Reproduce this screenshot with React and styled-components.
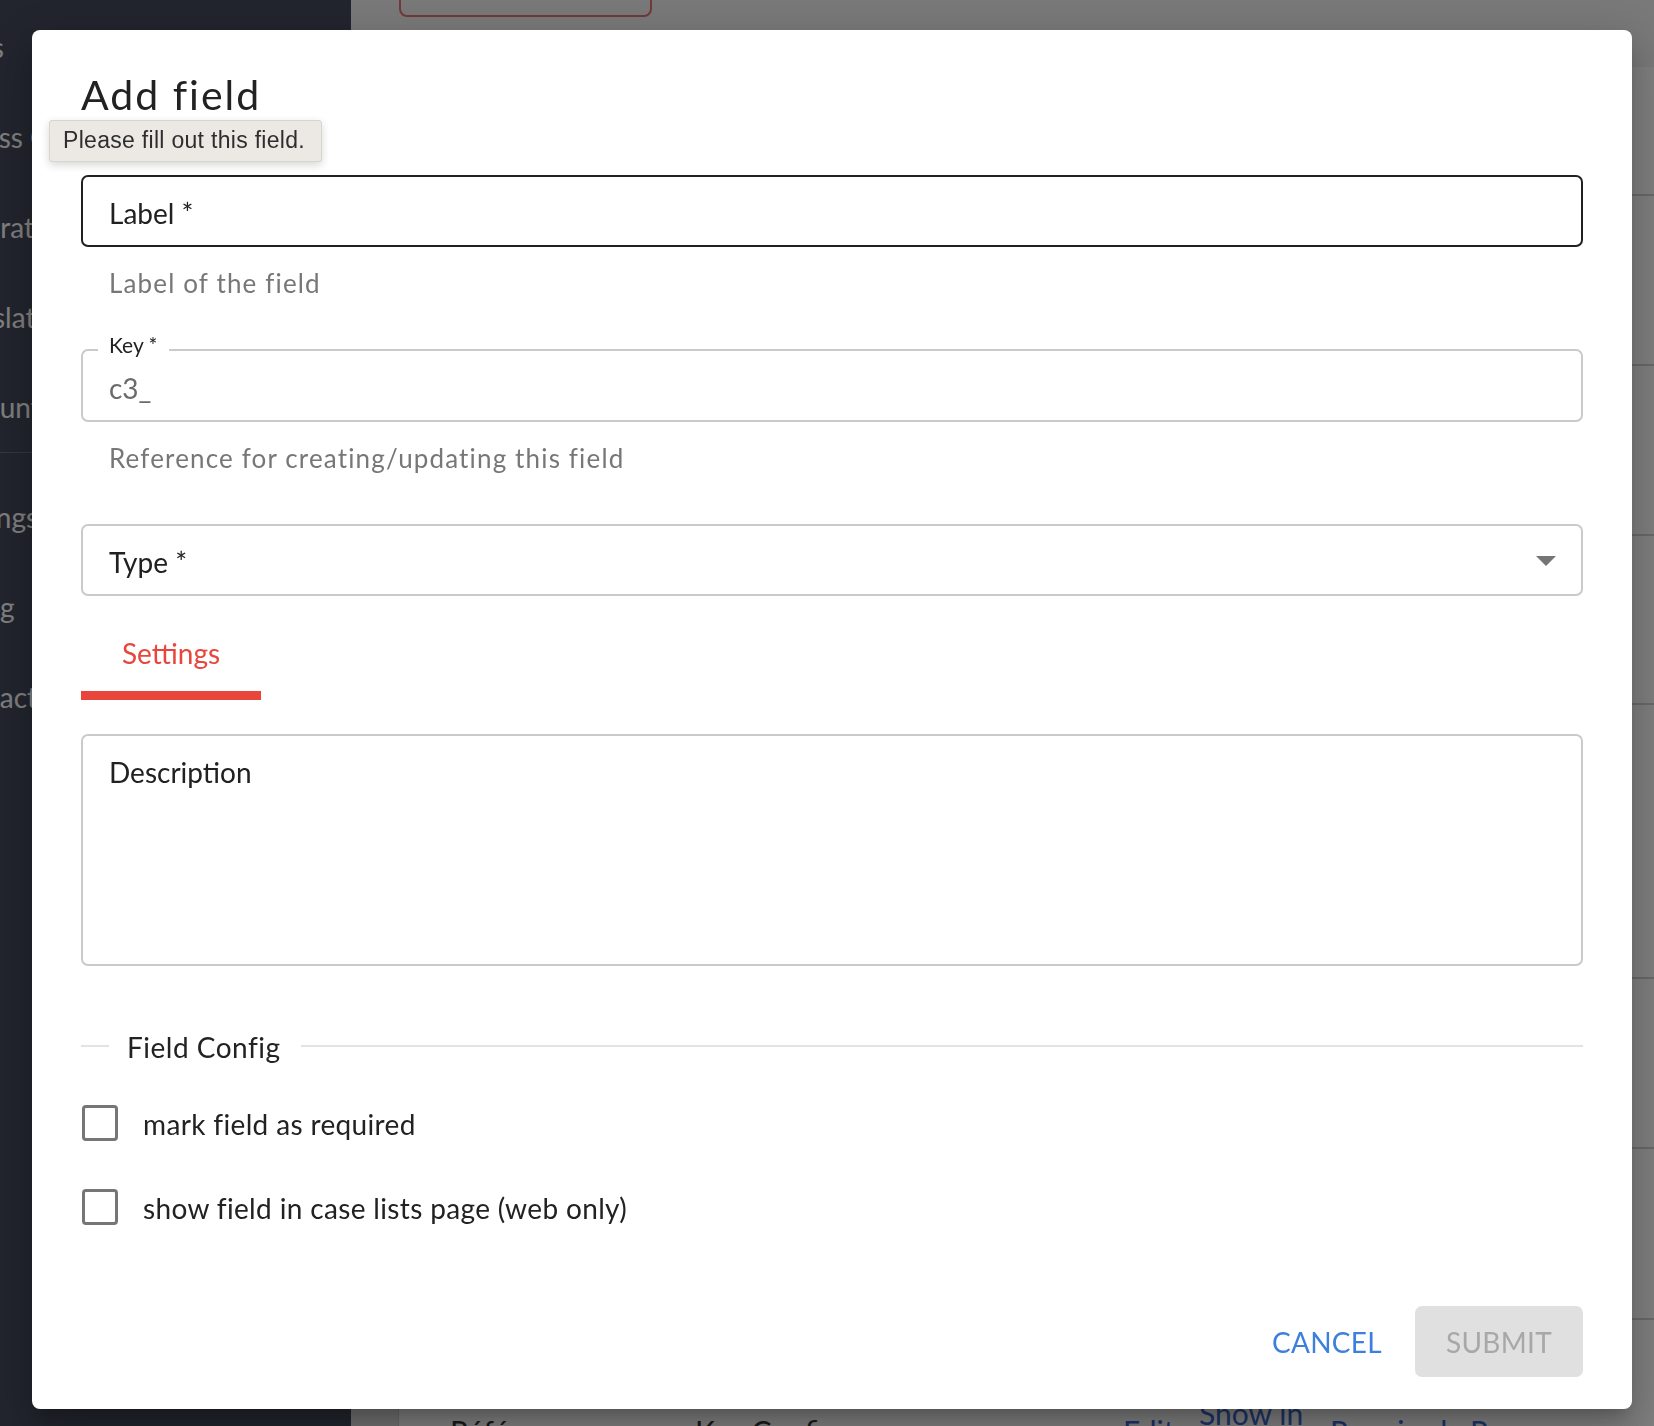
import React from 'react'
import styled, { createGlobalStyle } from 'styled-components'

const GlobalStyle = createGlobalStyle`
	html, body {
		margin: 0;
		padding: 0;
		height: 100%;
		overflow: hidden;
	}
	body {
		font-family: Lato, 'Noto Sans', sans-serif;
		color: #212121;
	}
	* {
		box-sizing: border-box;
	}
`

const navTop = [
	{ text: 'Forms', offset: -72 },
	{ text: 'Business Cases', offset: -84 },
	{ text: 'Integrations', offset: -62 },
	{ text: 'Translations', offset: -60 },
	{ text: 'Accounts', offset: -61 },
]

const navBottom = [
	{ text: 'Settings', offset: -60 },
	{ text: 'Billing', offset: -60 },
	{ text: 'Contact', offset: -60 },
]

// heights of the table rows that sit behind the dialog
const rows = [129, 170, 170, 169, 274, 170, 171]

const App = () => {
	return (
		<>
			<GlobalStyle />
			<Shell>
				<Sidebar>
					{navTop.map((item) => (
						<NavItem key={item.text} $offset={item.offset}>
							{item.text}
						</NavItem>
					))}
					<NavDivider />
					{navBottom.map((item) => (
						<NavItem key={item.text} $offset={item.offset}>
							{item.text}
						</NavItem>
					))}
				</Sidebar>
				<Main>
					<TopBar>
						<OutlineButton>Add field</OutlineButton>
					</TopBar>
					<Card>
						{rows.map((h, i) => (
							<Row key={i} $h={h} />
						))}
						<FieldRow>
							<Cell $w={245}>Référence</Cell>
							<Cell $w={428}>Key Config</Cell>
							<LinkCell $w={76}>Edit</LinkCell>
							<LinkCell $w={131}>Show in list</LinkCell>
							<LinkCell $w={140}>Required</LinkCell>
							<LinkCell $w={140}>Remove</LinkCell>
						</FieldRow>
					</Card>
				</Main>
			</Shell>

			<Backdrop />

			<Dialog>
				<Title>Add field</Title>
				<Tooltip>Please fill out this field.</Tooltip>

				<Outlined $h={72} $focused style={{ marginTop: 56 }}>
					<FieldText>Label *</FieldText>
				</Outlined>
				<Helper>Label of the field</Helper>

				<Outlined $h={73} style={{ marginTop: 50 }}>
					<FloatingLabel>Key *</FloatingLabel>
					<FieldText $muted>c3_</FieldText>
				</Outlined>
				<Helper>Reference for creating/updating this field</Helper>

				<Outlined $h={72} $select style={{ marginTop: 50 }}>
					<FieldText>Type *</FieldText>
					<svg width='48' height='48' viewBox='0 0 24 24'>
						<path d='M7 10l5 5 5-5z' fill='#757575' />
					</svg>
				</Outlined>

				<Tabs>
					<Tab>Settings</Tab>
				</Tabs>

				<Outlined $h={232} $top style={{ marginTop: 34 }}>
					<FieldText>Description</FieldText>
				</Outlined>

				<Divider>
					<DividerLine $short />
					<DividerText>Field Config</DividerText>
					<DividerLine />
				</Divider>

				<CheckRow $first>
					<CheckBox />
					<CheckLabel>mark field as required</CheckLabel>
				</CheckRow>
				<CheckRow>
					<CheckBox />
					<CheckLabel>show field in case lists page (web only)</CheckLabel>
				</CheckRow>

				<Actions>
					<CancelButton>Cancel</CancelButton>
					<SubmitButton disabled>Submit</SubmitButton>
				</Actions>
			</Dialog>
		</>
	)
}

const Shell = styled.div`
	display: flex;
	height: 100vh;
	overflow: hidden;
	background: #ffffff;
`

const Sidebar = styled.nav`
	width: 351px;
	flex: none;
	padding-top: 2px;
	background: #454a5c;
	color: #ffffff;
	overflow: hidden;
`

const NavItem = styled.div`
	height: 90px;
	display: flex;
	align-items: center;
	margin-left: ${(p) => p.$offset}px;
	font-size: 28px;
	white-space: nowrap;
`

const NavDivider = styled.div`
	height: 1px;
	margin-bottom: 19px;
	background: rgba(255, 255, 255, 0.2);
`

const Main = styled.main`
	flex: 1;
	min-width: 0;
	display: flex;
	flex-direction: column;
	margin-top: -70px;
	padding-left: 47px;
	background: #e2e2e2;
`

const TopBar = styled.div`
	height: 137px;
	flex: none;
	margin-left: -47px;
	padding: 7px 0 0 48px;
	background: #f2f2f2;
`

const OutlineButton = styled.button`
	width: 253px;
	height: 80px;
	border: 2px solid #e57373;
	border-radius: 8px;
	background: transparent;
	color: #e57373;
	font-family: Lato, sans-serif;
	font-size: 24px;
`

const Card = styled.div`
	flex: 1;
	background: #ffffff;
	border-left: 1px solid #cfcfcf;
`

const Row = styled.div`
	height: ${(p) => p.$h}px;
	border-bottom: 2px solid #d2d2d2;
`

const FieldRow = styled.div`
	height: 222px;
	display: flex;
	align-items: center;
	padding-left: 51px;
	font-size: 30px;
`

const Cell = styled.div`
	width: ${(p) => p.$w}px;
	flex: none;
	color: #333333;
`

const LinkCell = styled(Cell)`
	color: #3a66d0;
`

const Backdrop = styled.div`
	position: fixed;
	inset: 0;
	background: rgba(0, 0, 0, 0.5);
`

const Dialog = styled.div`
	position: fixed;
	top: 30px;
	left: 32px;
	width: 1600px;
	display: flex;
	flex-direction: column;
	padding: 41px 49px 32px;
	background: #ffffff;
	border-radius: 8px;
	box-shadow: 0 11px 15px -7px rgba(0, 0, 0, 0.2),
		0 24px 38px 3px rgba(0, 0, 0, 0.14), 0 9px 46px 8px rgba(0, 0, 0, 0.12);
`

const Title = styled.h2`
	margin: 0;
	font-size: 41px;
	line-height: 48px;
	font-weight: 400;
	letter-spacing: 2px;
	color: #222222;
`

const Tooltip = styled.div`
	position: absolute;
	left: 17px;
	top: 90px;
	padding: 6px 16px 7px 13px;
	background: #ece9e5;
	border: 1px solid #d8d5d0;
	border-radius: 3px;
	box-shadow: 0 3px 9px rgba(0, 0, 0, 0.16);
	font-family: 'Liberation Sans', Arial, sans-serif;
	font-size: 23px;
	line-height: 27px;
	letter-spacing: 0.3px;
	color: #2e2e2e;
	white-space: nowrap;
`

const Outlined = styled.div`
	position: relative;
	height: ${(p) => p.$h}px;
	flex: none;
	display: flex;
	align-items: ${(p) => (p.$top ? 'flex-start' : 'center')};
	justify-content: ${(p) => (p.$select ? 'space-between' : 'flex-start')};
	padding: ${(p) =>
		p.$top ? '15px 26px 0' : p.$select ? '0 11px 0 26px' : '0 26px'};
	border: 2px solid ${(p) => (p.$focused ? '#212121' : '#cacaca')};
	border-radius: 7px;
`

const FieldText = styled.span`
	padding-top: 4px;
	font-size: 28px;
	line-height: 34px;
	color: ${(p) => (p.$muted ? '#6b6b6b' : '#212121')};
`

const FloatingLabel = styled.span`
	position: absolute;
	top: -18px;
	left: 15px;
	padding: 0 11px;
	background: #ffffff;
	font-size: 21px;
	line-height: 24px;
	color: #222222;
`

const Helper = styled.div`
	margin-top: 21px;
	padding-left: 28px;
	font-size: 26px;
	line-height: 31px;
	letter-spacing: 1.15px;
	color: #777777;
`

const Tabs = styled.div`
	display: flex;
	margin-top: 38px;
`

const Tab = styled.div`
	width: 180px;
	padding: 2px 0 21px;
	border-bottom: 9px solid #e8453c;
	text-align: center;
	font-size: 28px;
	line-height: 34px;
	color: #e8453c;
`

const Divider = styled.div`
	display: flex;
	align-items: center;
	gap: 18px;
	margin-top: 62px;
`

const DividerLine = styled.div`
	height: 2px;
	background: #e3e3e3;
	${(p) => (p.$short ? 'width: 28px; flex: none;' : 'flex: 1;')}
`

const DividerText = styled.span`
	padding: 2px 2px 0 0;
	font-size: 28px;
	line-height: 34px;
	letter-spacing: 0.5px;
	color: #222222;
`

const CheckRow = styled.label`
	height: 60px;
	display: flex;
	align-items: center;
	margin-top: ${(p) => (p.$first ? '28.5px' : '24px')};
`

const CheckBox = styled.span`
	width: 36px;
	height: 36px;
	flex: none;
	margin-left: 1px;
	border: 3px solid #767676;
	border-radius: 4px;
`

const CheckLabel = styled.span`
	margin-left: 25px;
	padding-top: 2px;
	font-size: 28px;
	line-height: 34px;
	letter-spacing: 0.35px;
	color: #222222;
`

const Actions = styled.div`
	display: flex;
	justify-content: flex-end;
	gap: 17px;
	margin-top: 69.5px;
`

const BaseButton = styled.button`
	height: 71px;
	padding-top: 2px;
	border: none;
	border-radius: 7px;
	font-family: Lato, sans-serif;
	font-size: 28px;
	text-transform: uppercase;
	letter-spacing: 0.3px;
`

const CancelButton = styled(BaseButton)`
	padding-left: 16px;
	padding-right: 16px;
	background: transparent;
	color: #3d7fdd;
`

const SubmitButton = styled(BaseButton)`
	width: 168px;
	background: #e0e0e0;
	color: #a8a8a8;
`

export default App
